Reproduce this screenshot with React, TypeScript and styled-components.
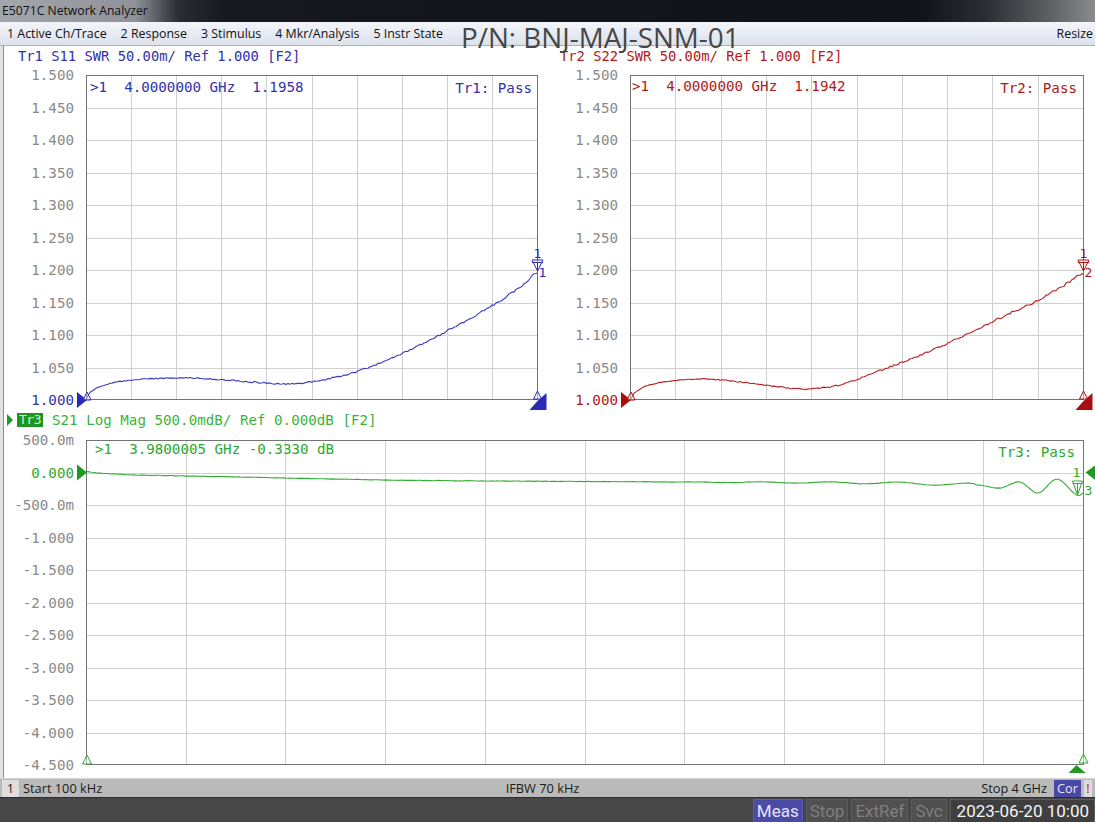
import React from "react";
import styled, { createGlobalStyle } from "styled-components";

const MONO = `"DejaVu Sans Mono", "Liberation Mono", monospace`;
const UI = `"Open Sans", "Noto Sans", sans-serif`;

const GlobalStyle = createGlobalStyle`
  html, body {
    margin: 0;
    padding: 0;
    background: #dcdcdc;
  }
  body {
    width: 1095px;
    height: 822px;
    overflow: hidden;
    font-family: ${UI};
  }
`;

type Pt = [number, number];

// deterministic jitter so the traces look measured, not drawn
const rnd = (i: number, seed: number) => {
  const s = Math.sin(i * 127.1 + seed * 311.7) * 43758.5453;
  return s - Math.floor(s) - 0.5;
};

const interp = (ctrl: Pt[], x: number) => {
  let i = 0;
  while (i < ctrl.length - 2 && x > ctrl[i + 1][0]) i++;
  const p0 = ctrl[Math.max(i - 1, 0)];
  const p1 = ctrl[i];
  const p2 = ctrl[i + 1];
  const p3 = ctrl[Math.min(i + 2, ctrl.length - 1)];
  const t = (x - p1[0]) / (p2[0] - p1[0] || 1);
  const t2 = t * t;
  const t3 = t2 * t;
  return (
    0.5 *
    (2 * p1[1] +
      (-p0[1] + p2[1]) * t +
      (2 * p0[1] - 5 * p1[1] + 4 * p2[1] - p3[1]) * t2 +
      (-p0[1] + 3 * p1[1] - 3 * p2[1] + p3[1]) * t3)
  );
};

const buildTrace = (
  ctrl: Pt[],
  end: number,
  wobble: (x: number, k: number) => number,
  step = 2
) => {
  const out: string[] = [];
  const n = Math.ceil(end / step);
  for (let k = 0; k <= n; k++) {
    const x = Math.min(k * step, end);
    const y = interp(ctrl, x) + (k === 0 || k === n ? 0 : wobble(x, k));
    out.push(`${x.toFixed(1)},${y.toFixed(2)}`);
  }
  return out.join(" ");
};

const S11_W = 452;
const S22_W = 454;
const S21_W = 998;

const s11 = buildTrace(
  [
    [0, 325], [3, 318], [12, 312], [30, 307], [60, 304], [100, 303], [140, 305],
    [180, 308], [205, 309], [225, 307], [250, 302], [284, 292], [320, 277],
    [354, 260], [385, 243], [414, 226], [435, 212], [451, 198],
  ],
  S11_W - 1,
  (x, k) => rnd(k, 1) * (0.7 + (1.6 * x) / S11_W)
);

const s22 = buildTrace(
  [
    [0, 325], [4, 318], [15, 311], [40, 306], [75, 304], [110, 307], [150, 312],
    [175, 314], [200, 312], [220, 307], [240, 299], [270, 288], [300, 276],
    [335, 260], [370, 243], [405, 227], [430, 213], [453, 199],
  ],
  S22_W - 1,
  (x, k) => rnd(k, 2) * (0.7 + (1.6 * x) / S22_W)
);

const s21 = buildTrace(
  [
    [0, 31.5], [10, 33], [50, 35], [100, 36], [200, 38], [300, 40], [400, 41],
    [600, 42], [800, 43], [894, 45], [914, 48], [934, 42], [952, 53], [971, 39],
    [991, 55], [997, 53.5],
  ],
  S21_W - 1,
  (x, k) => {
    const ripple = x > 560 && x < 890 ? (Math.sin(x / 11) * 1.5 * (x - 560)) / 330 : 0;
    return ripple + rnd(k, 3) * 0.4;
  }
);

/* ---------- window chrome ---------- */

const Screen = styled.div`
  position: relative;
  width: 1095px;
  height: 822px;
  display: flex;
  flex-direction: column;
  background: #e2e2e2;
  overflow: hidden;
`;

const TitleBar = styled.div`
  flex: none;
  height: 22px;
  padding-left: 2px;
  font: 12.2px/22px ${UI};
  color: #111;
  white-space: nowrap;
  background: linear-gradient(
    to right,
    #a3a7ac 0px,
    #8f9399 135px,
    #2a2d33 178px,
    #15181e 225px,
    #10131a 84%,
    #2b2d32 90%,
    #5f6165 96%,
    #8a8b8d 100%
  );
`;

const MenuBar = styled.nav`
  position: relative;
  flex: none;
  height: 23px;
  display: flex;
  align-items: center;
  gap: 14px;
  padding: 0 7px;
  font: 12.4px ${UI};
  color: #111;
  background: linear-gradient(#f3f5fa, #e6eaf2 55%, #dde2ec);
  border-bottom: 1px solid #a9afbb;
`;

const MenuItem = styled.span`
  white-space: nowrap;
`;

const ResizeItem = styled(MenuItem)`
  margin-left: auto;
  margin-right: -5px;
`;

const PartNumber = styled.div`
  position: absolute;
  left: 461px;
  top: 4px;
  font: 27.8px/22px ${UI};
  color: #474747;
  white-space: nowrap;
  pointer-events: none;
`;

/* ---------- chart area ---------- */

const Main = styled.main`
  flex: none;
  box-sizing: border-box;
  height: 732px;
  margin-left: 3px;
  padding-top: 1px;
  border-left: 1px solid #8e8e8e;
  background: #fff;
  display: flex;
  flex-direction: column;
`;

const TopRow = styled.div`
  display: grid;
  grid-template-columns: 544px 1fr;
`;

const Panel = styled.section<{ $padRight: number; $padBottom?: number }>`
  padding: 0 ${(p) => p.$padRight}px ${(p) => p.$padBottom ?? 10}px 6px;
`;

const Header = styled.div<{ $color: string }>`
  height: 18px;
  padding-left: 8px;
  display: flex;
  align-items: center;
  font: 13.8px/18px ${MONO};
  color: ${(p) => p.$color};
  white-space: pre;
`;

const RightHeader = styled(Header)`
  padding-left: 6px;
`;

const WideHeader = styled(Header)`
  padding-left: 0;
  margin: 1px 0 0 -3px;
  font-size: 14.2px;
`;

const ActiveArrow = styled.span`
  width: 0;
  height: 0;
  border-top: 6px solid transparent;
  border-bottom: 6px solid transparent;
  border-left: 6px solid #1e9a1e;
  margin-right: 4px;
`;

const TraceTag = styled.span`
  width: 26px;
  height: 14px;
  margin-right: 9px;
  background: #1f961f;
  color: #c9f5c9;
  font: 13px/14px ${MONO};
  text-align: center;
  letter-spacing: -0.5px;
`;

const Body = styled.div<{ $top: number }>`
  display: flex;
  gap: 8px;
  padding-top: ${(p) => p.$top}px;
`;

const Axis = styled.div<{ $width: number }>`
  flex: none;
  box-sizing: border-box;
  width: ${(p) => p.$width}px;
  height: 341px;
  margin: -8px 0;
  padding-right: 4px;
  display: flex;
  flex-direction: column;
  justify-content: space-between;
  align-items: flex-end;
`;

const AxisLabel = styled.span<{ $color?: string }>`
  height: 16px;
  font: 14.2px/16px ${MONO};
  color: ${(p) => p.$color ?? "#8a8a8a"};
  white-space: pre;
`;

const PlotBox = styled.div<{ $width: number }>`
  position: relative;
  flex: none;
  width: ${(p) => p.$width}px;
  height: 325px;
`;

const PlotSvg = styled.svg`
  display: block;
  overflow: visible;
`;

const Readout = styled.div<{ $color: string; $top: number; $left?: number; $right?: number }>`
  position: absolute;
  top: ${(p) => p.$top}px;
  ${(p) => (p.$left !== undefined ? `left: ${p.$left}px;` : "")}
  ${(p) => (p.$right !== undefined ? `right: ${p.$right}px;` : "")}
  font: 14.2px/16px ${MONO};
  color: ${(p) => p.$color};
  white-space: pre;
`;

/* ---------- status + task bars ---------- */

const StatusBar = styled.div`
  flex: none;
  height: 18px;
  display: grid;
  grid-template-columns: 1fr auto 1fr;
  align-items: center;
  background: #bababa;
  border-top: 1px solid #d4d4d4;
  border-bottom: 1px solid #2e2e2e;
  font: 12.8px/17px ${UI};
  color: #1a1a1a;
`;

const StatusLeft = styled.div`
  display: flex;
  align-items: center;
`;

const StatusCenter = styled.span`
  margin-right: 10px;
`;

const StatusRight = styled.div`
  display: flex;
  align-items: center;
  justify-content: flex-end;
`;

const ChannelBox = styled.span`
  width: 17px;
  height: 17px;
  margin: 0 4px 0 2px;
  background: #dedede;
  text-align: center;
`;

const CorBox = styled.span`
  margin-left: 7px;
  padding: 0 3px;
  height: 17px;
  background: #4848a6;
  color: #e6e6ff;
`;

const AlertBox = styled.span`
  margin: 0 3px 0 3px;
  width: 8px;
  height: 17px;
  background: #dcdcdc;
  color: #c02020;
  text-align: center;
`;

const TaskBar = styled.div`
  flex: 1;
  display: flex;
  justify-content: flex-end;
  align-items: stretch;
  gap: 3px;
  padding-top: 1px;
  background: #474747;
  font: 17px/22px Roboto, ${UI};
`;

const TaskItem = styled.span<{ $active?: boolean; $dim?: boolean }>`
  padding: 0 3px;
  background: ${(p) => (p.$active ? "#4b4ba6" : "#505050")};
  color: ${(p) => (p.$active ? "#e2e2ff" : p.$dim ? "#7f7f7f" : "#f4f4f4")};
  border: 1px solid ${(p) => (p.$active ? "#5a5ab8" : "#5c5c5c")};
  border-bottom: none;
`;

const DateItem = styled(TaskItem)`
  background: #3f3f3f;
  padding: 0 5px 0 6px;
`;

/* ---------- plot drawing ---------- */

interface PlotProps {
  width: number;
  trace: string;
  traceColor: string;
  children?: React.ReactNode;
}

const Plot = ({ width, trace, traceColor, children }: PlotProps) => {
  const rx = width - 1;
  const xs = Array.from({ length: 9 }, (_, i) => Math.round(((i + 1) * rx) / 10) + 0.5);
  const ys = Array.from({ length: 9 }, (_, j) => Math.round((j + 1) * 32.5) + 0.5);
  return (
    <PlotSvg width={width} height={325}>
      <g stroke="#cfcfcf" strokeWidth={1}>
        {xs.map((x) => (
          <line key={`x${x}`} x1={x} y1={0} x2={x} y2={325} />
        ))}
        {ys.map((y) => (
          <line key={`y${y}`} x1={0} y1={y} x2={width} y2={y} />
        ))}
      </g>
      <rect x={0.5} y={0.5} width={rx} height={324} fill="none" stroke="#747474" />
      <polyline points={trace} fill="none" stroke={traceColor} strokeWidth={1.1} strokeLinejoin="round" />
      {children}
    </PlotSvg>
  );
};

const Hollow = ({ pts, color }: { pts: string; color: string }) => (
  <polygon points={pts} fill="#fff" fillOpacity={0.4} stroke={color} strokeWidth={1} />
);

const SwrMarkers = ({ width, color, label }: { width: number; color: string; label: string }) => {
  const rx = width - 0.5;
  return (
    <g>
      <polygon points="-9,317 1,325 -9,333" fill={color} />
      <Hollow pts="-3,325 1,317 5,325" color={color} />
      <polygon points={`${rx - 8},335 ${rx},326 ${rx + 9},318 ${rx + 9},335`} fill={color} />
      <Hollow pts={`${rx - 4},324 ${rx},316 ${rx + 4},324`} color={color} />
      <text x={rx} y={183} fill={color} fontFamily={MONO} fontSize={13} textAnchor="middle">
        1
      </text>
      <Hollow pts={`${rx - 5.5},185 ${rx + 5.5},185 ${rx},196`} color={color} />
      <line x1={rx - 5.5} y1={187.5} x2={rx + 5.5} y2={187.5} stroke={color} />
      <line x1={rx} y1={187.5} x2={rx} y2={195} stroke={color} />
      <text x={rx + 1} y={202} fill={color} fontFamily={MONO} fontSize={13}>
        {label}
      </text>
    </g>
  );
};

const GREEN = "#2ea82e";

const S21Markers = () => {
  const rx = S21_W - 0.5;
  return (
    <g>
      <polygon points="-9,24.5 1,32.5 -9,40.5" fill="#1e9a1e" />
      <text x={rx - 7} y={37} fill={GREEN} fontFamily={MONO} fontSize={13} textAnchor="middle">
        1
      </text>
      <polygon points={`${rx + 2},32.5 ${rx + 12},25 ${rx + 12},40`} fill="#1e9a1e" />
      <Hollow pts={`${rx - 11},41 ${rx - 1},41 ${rx - 6},55`} color={GREEN} />
      <line x1={rx - 11} y1={43.5} x2={rx - 1} y2={43.5} stroke={GREEN} />
      <line x1={rx - 6} y1={43.5} x2={rx - 6} y2={54} stroke={GREEN} />
      <text x={rx + 1} y={55} fill={GREEN} fontFamily={MONO} fontSize={13}>
        3
      </text>
      <Hollow pts="-3.5,324 1,315 5.5,324" color={GREEN} />
      <Hollow pts={`${rx - 4.5},323 ${rx},314 ${rx + 4.5},323`} color={GREEN} />
      <polygon points={`${rx - 15},333 ${rx - 7},325 ${rx + 2},333`} fill="#1e9a1e" />
    </g>
  );
};

const SWR_LABELS = ["1.500", "1.450", "1.400", "1.350", "1.300", "1.250", "1.200", "1.150", "1.100", "1.050", "1.000"];
const DB_LABELS = ["500.0m", "0.000", "-500.0m", "-1.000", "-1.500", "-2.000", "-2.500", "-3.000", "-3.500", "-4.000", "-4.500"];

const AxisColumn = ({ labels, refIndex, refColor, width }: { labels: string[]; refIndex: number; refColor: string; width: number }) => (
  <Axis $width={width}>
    {labels.map((l, i) => (
      <AxisLabel key={l} $color={i === refIndex ? refColor : undefined}>
        {l}
      </AxisLabel>
    ))}
  </Axis>
);

const BLUE = "#3232aa";
const BLUE_TRACE = "#3a3ac4";
const RED = "#b01a1a";
const RED_TRACE = "#b82222";

export default function App() {
  return (
    <Screen>
      <GlobalStyle />
      <TitleBar>E5071C Network Analyzer</TitleBar>
      <MenuBar>
        <MenuItem>1 Active Ch/Trace</MenuItem>
        <MenuItem>2 Response</MenuItem>
        <MenuItem>3 Stimulus</MenuItem>
        <MenuItem>4 Mkr/Analysis</MenuItem>
        <MenuItem>5 Instr State</MenuItem>
        <ResizeItem>Resize</ResizeItem>
        <PartNumber>P/N: BNJ-MAJ-SNM-01</PartNumber>
      </MenuBar>

      <Main>
        <TopRow>
          <Panel $padRight={10}>
            <Header $color={BLUE}>Tr1 S11 SWR 50.00m/ Ref 1.000 [F2]</Header>
            <Body $top={10}>
              <AxisColumn labels={SWR_LABELS} refIndex={10} refColor={BLUE} width={68} />
              <PlotBox $width={S11_W}>
                <Plot width={S11_W} trace={s11} traceColor={BLUE_TRACE}>
                  <SwrMarkers width={S11_W} color="#2a2ab4" label="1" />
                </Plot>
                <Readout $color={BLUE} $top={4} $left={4}>
                  {">1  4.0000000 GHz  1.1958"}
                </Readout>
                <Readout $color={BLUE} $top={5} $right={6}>
                  Tr1: Pass
                </Readout>
              </PlotBox>
            </Body>
          </Panel>

          <Panel $padRight={11}>
            <RightHeader $color={RED}>Tr2 S22 SWR 50.00m/ Ref 1.000 [F2]</RightHeader>
            <Body $top={10}>
              <AxisColumn labels={SWR_LABELS} refIndex={10} refColor={RED} width={68} />
              <PlotBox $width={S22_W}>
                <Plot width={S22_W} trace={s22} traceColor={RED_TRACE}>
                  <SwrMarkers width={S22_W} color="#a81010" label="2" />
                </Plot>
                <Readout $color={RED} $top={3} $left={2}>
                  {">1  4.0000000 GHz  1.1942"}
                </Readout>
                <Readout $color={RED} $top={5} $right={7}>
                  Tr2: Pass
                </Readout>
              </PlotBox>
            </Body>
          </Panel>
        </TopRow>

        <Panel $padRight={11} $padBottom={0}>
          <WideHeader $color="#3cb43c">
            <ActiveArrow />
            <TraceTag>Tr3</TraceTag>
            S21 Log Mag 500.0mdB/ Ref 0.000dB [F2]
          </WideHeader>
          <Body $top={11}>
            <AxisColumn labels={DB_LABELS} refIndex={1} refColor={GREEN} width={68} />
            <PlotBox $width={S21_W}>
              <Plot width={S21_W} trace={s21} traceColor="#34ac34">
                <S21Markers />
              </Plot>
              <Readout $color={GREEN} $top={1} $left={9}>
                {">1  3.9800005 GHz -0.3330 dB"}
              </Readout>
              <Readout $color={GREEN} $top={4} $right={9}>
                Tr3: Pass
              </Readout>
            </PlotBox>
          </Body>
        </Panel>
      </Main>

      <StatusBar>
        <StatusLeft>
          <ChannelBox>1</ChannelBox>
          Start 100 kHz
        </StatusLeft>
        <StatusCenter>IFBW 70 kHz</StatusCenter>
        <StatusRight>
          Stop 4 GHz
          <CorBox>Cor</CorBox>
          <AlertBox>!</AlertBox>
        </StatusRight>
      </StatusBar>

      <TaskBar>
        <TaskItem $active>Meas</TaskItem>
        <TaskItem $dim>Stop</TaskItem>
        <TaskItem $dim>ExtRef</TaskItem>
        <TaskItem $dim>Svc</TaskItem>
        <DateItem>2023-06-20 10:00</DateItem>
      </TaskBar>
    </Screen>
  );
}
